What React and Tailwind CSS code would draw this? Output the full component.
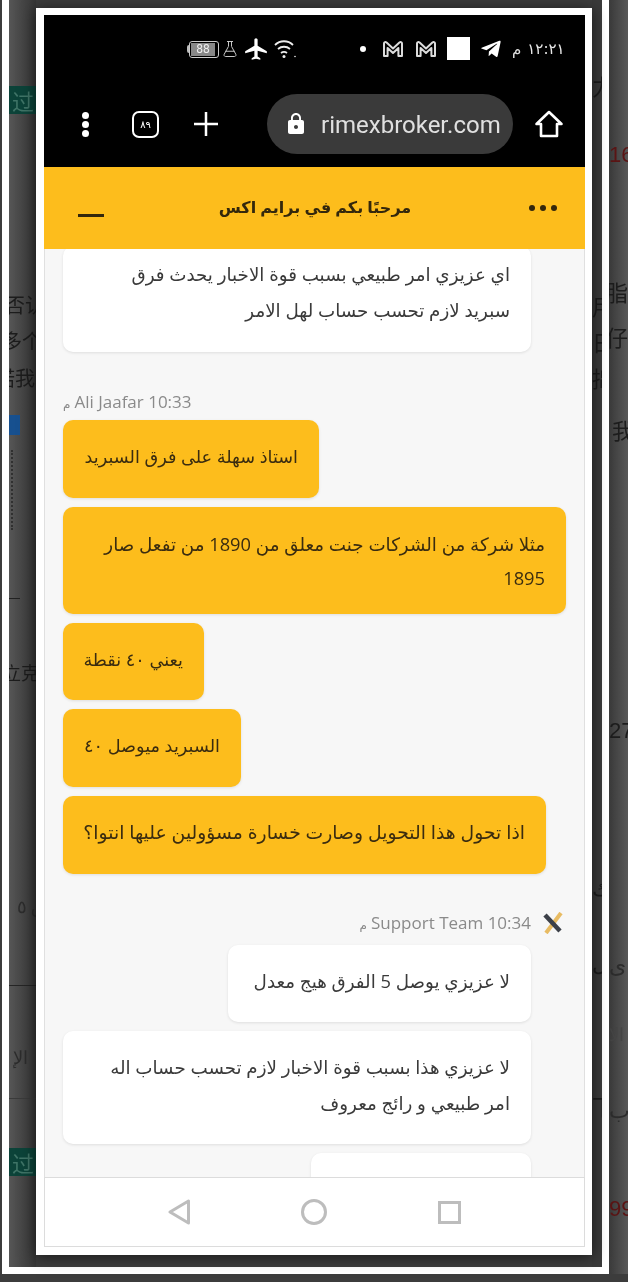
import { FaTelegramPlane } from 'react-icons/fa';
import { MdAirplanemodeActive, MdLock } from 'react-icons/md';
import { FlaskConical } from 'lucide-react';

const font = "font-['Open_Sans','Noto_Sans','DejaVu_Sans',sans-serif]";

function MailM() {
  return (
    <svg width="22" height="18" viewBox="0 0 22 18" fill="none" stroke="#dcdcdc" strokeWidth="2">
      <path d="M2 16V3.5C2 2 3.6 1.6 4.6 2.6L11 8.5l6.4-5.9c1-1 2.6-.6 2.6.9V16h-3.6V8L11 13 5.6 8v8z" strokeLinejoin="round" />
    </svg>
  );
}

function Bubble({ className, children }) {
  return (
    <div dir="rtl" className={`flex items-center rounded-[10px] shadow-[0_1px_3px_rgba(0,0,0,0.1)] shrink-0 ${className}`}>
      <div className="pb-[6px]">{children}</div>
    </div>
  );
}

function LeftStrip() {
  return (
    <div className="w-[27px] h-full shrink-0 bg-linear-to-r from-[#565656] to-[#363636] overflow-hidden flex flex-col text-[20px] leading-[36px] text-[#1c1c1c] font-['Noto_Sans_CJK_SC',sans-serif] whitespace-nowrap">
      <div className="mt-[86px] h-[28px] bg-[#0c4339] text-[#3f7467] text-[22px] leading-[28px] pl-[3px]">过</div>
      <div className="mt-[173px] -ml-[4px]">否认</div>
      <div className="-ml-[7px]">多个</div>
      <div className="mt-px -ml-[14px]">诺我</div>
      <div className="mt-[19px] w-[11px] h-[20px] bg-[#17508f]"></div>
      <div className="mt-[15px] ml-[2px] w-[4px] h-[80px] border-l-2 border-dotted border-[#303030]"></div>
      <div className="mt-[68px] w-[11px] h-px bg-[#222]"></div>
      <div className="mt-[55px] -ml-[6px] text-[18px]">立克</div>
      <div className="mt-[197px] pl-[8px] text-[18px] text-[#2c2c2c]">ق ٥</div>
      <div className="mt-[62px] h-px bg-[#252525]"></div>
      <div className="mt-[52px] pl-[4px] text-[18px] text-[#2c2c2c]">الإ</div>
      <div className="mt-[24px] h-px bg-[#3a3a3a]"></div>
      <div className="mt-[49px] h-[28px] bg-[#0c4339] text-[#3f7467] text-[22px] leading-[28px] pl-[3px]">过</div>
    </div>
  );
}

function MiddleStrip() {
  return (
    <div className="w-[10px] h-full shrink-0 bg-[#3a3a3a] overflow-hidden flex flex-col text-[22px] leading-[36px] text-[#1c1c1c] font-['Noto_Sans_CJK_SC',sans-serif] whitespace-nowrap">
      <div className="mt-[67px]">力</div>
      <div className="mt-[184px]">用</div>
      <div>日</div>
      <div>拙</div>
      <div className="mt-[473px]">ك</div>
      <div className="mt-[39px]">ل</div>
      <div className="mt-[108px]">下</div>
    </div>
  );
}

function RightStrip() {
  return (
    <div className="flex-1 h-full bg-linear-to-r from-[#3a3a3a] to-[#585858] overflow-hidden flex flex-col text-[22px] leading-[36px] text-[#1c1c1c] font-['Noto_Sans_CJK_SC',sans-serif] whitespace-nowrap">
      <div className="mt-[137px] text-[#5a1414] font-['Liberation_Sans',sans-serif]">16</div>
      <div className="mt-[100px] flex justify-end">脂</div>
      <div className="mt-[9px] flex justify-end">仔</div>
      <div className="mt-[57px] pl-[3px]">我</div>
      <div className="mt-[266px] font-['Liberation_Sans',sans-serif]">27</div>
      <div className="mt-[196px] text-[#2c2c2c]">ى</div>
      <div className="mt-[34px] text-[18px] text-[#444]">الا</div>
      <div className="mt-[39px] text-[#2c2c2c]">ب</div>
      <div className="mt-[65px] text-[#5a1414] font-['Liberation_Sans',sans-serif]">99</div>
    </div>
  );
}

function StatusBar() {
  return (
    <div className="h-[68px] flex items-center pl-[143px] text-white">
      {/* battery */}
      <div className="w-[32px] h-[17px] flex items-center">
        <div className="w-[2px] h-[8px] bg-[#bbb] rounded-l-sm"></div>
        <div className="flex-1 h-[17px] border border-[#ccc] rounded-[3px] p-px">
          <div className="h-full w-[24px] bg-[#888] text-[12px] leading-[13px] text-center text-[#eee] font-['Roboto',sans-serif]">88</div>
        </div>
      </div>
      <FlaskConical size={18} strokeWidth={1.3} color="#ccc" className="ml-[2px]" />
      <MdAirplanemodeActive size={26} className="ml-[4px]" />
      <svg width="24" height="22" viewBox="0 0 24 22" fill="none" stroke="#eee" strokeWidth="1.8" className="ml-[4px]">
        <path d="M2 7c5-5 13-5 18 0M5 11c3.500-3 8.500-3 12 0M8 15c2-1.500 4-1.500 6 0" />
        <circle cx="11" cy="18.500" r="1.500" fill="#eee" stroke="none" />
        <circle cx="22" cy="18.500" r="0.800" fill="#eee" stroke="none" />
      </svg>
      <div className="ml-[63px] w-[6px] h-[6px] rounded-full bg-white"></div>
      <div className="ml-[16px]"><MailM /></div>
      <div className="ml-[11px]"><MailM /></div>
      <div className="ml-[10px] w-[23px] h-[23px] -mt-px bg-white"></div>
      <FaTelegramPlane size={22} className="ml-[10px]" />
      <span className="ml-[10px] text-[15px] text-[#ddd] font-['DejaVu_Sans',sans-serif]">م</span>
      <span className="ml-[6px] text-[15px] text-[#e8e8e8] font-['DejaVu_Sans',sans-serif]">١٢:٢١</span>
    </div>
  );
}

function BrowserBar() {
  return (
    <div className="h-[84px] pb-[2px] flex items-center text-white">
      <div className="ml-[38px] w-[8px] flex flex-col gap-[2px]">
        <div className="w-[7px] h-[7px] rounded-full bg-white"></div>
        <div className="w-[7px] h-[7px] rounded-full bg-white"></div>
        <div className="w-[7px] h-[7px] rounded-full bg-white"></div>
      </div>
      <div className="ml-[42px] w-[27px] h-[27px] border-[2.5px] border-white rounded-[7px] flex items-center justify-center text-[10px] font-['DejaVu_Sans',sans-serif]">٨٩</div>
      <svg width="24" height="24" viewBox="0 0 24 24" stroke="#fff" strokeWidth="2.5" className="ml-[35px]">
        <path d="M0 12h24M12 0v24" />
      </svg>
      <div className="ml-[49px] w-[246px] h-[60px] rounded-full bg-[#3a3a3a] flex items-center pl-[17px]">
        <MdLock size={24} className="text-white" />
        <span className="ml-[13px] mt-[1px] text-[24px] text-[#e0e0e0] font-['Roboto',sans-serif]">rimexbroker.com</span>
      </div>
      <svg width="30" height="30" viewBox="0 0 30 30" fill="none" stroke="#fff" strokeWidth="2.6" strokeLinejoin="round" className="ml-[21px]">
        <path d="M15 3 2.500 15H7v12h16V15h4.500z" />
      </svg>
    </div>
  );
}

function Header() {
  return (
    <div className="h-[82px] bg-[#fdbd1c] flex items-center relative">
      <div className="ml-[34px] mt-[14px] w-[26px] h-[3px] bg-[#33270c]"></div>
      <div dir="rtl" className={`flex-1 text-center text-[16px] font-bold text-[#33270c] pr-[3px] pb-[2px] ${font}`}>مرحبًا بكم في برايم اكس</div>
      <div className="mr-[28px] flex gap-[5px]">
        <div className="w-[6px] h-[6px] rounded-full bg-[#33270c]"></div>
        <div className="w-[6px] h-[6px] rounded-full bg-[#33270c]"></div>
        <div className="w-[6px] h-[6px] rounded-full bg-[#33270c]"></div>
      </div>
    </div>
  );
}

function Chat() {
  const yellow = 'bg-[#fdbd1c] text-[#3a2c10] pl-[10px] pr-[21px]';
  const white = 'bg-white text-[#3a3a3a] pl-[10px] pr-[21px] self-end mr-[35px]';
  return (
    <div className={`h-[928px] overflow-hidden bg-[#f7f7f7] border-x border-[#e0e0e0] px-[18px] flex flex-col gap-[9px] text-[18.300px] leading-[36px] ${font}`}>
      <Bubble className={`${white} w-[468px] h-[106px] -mt-[3px]`}>
        <div className="pb-[8px]">
          اي عزيزي امر طبيعي بسبب قوة الاخبار يحدث فرق
          <br />
          سبريد لازم تحسب حساب لهل الامر
        </div>
      </Bubble>

      <div className="mt-[30px] -mb-[2px] h-[22px] flex items-center text-[17px] leading-[22px] text-[#8a8a8a]">
        <span className="text-[12px] mt-[4px] mr-[4px]">م</span>Ali Jaafar 10:33
      </div>
      <Bubble className={`${yellow} w-[256px] h-[78px] text-[17.700px]`}>استاذ سهلة على فرق السبريد</Bubble>
      <Bubble className={`${yellow} w-[503px] h-[107px] leading-[34px]`}>
        <div className="pt-[6px]">مثلا شركة من الشركات جنت معلق من 1890 من تفعل صار 1895</div>
      </Bubble>
      <Bubble className={`${yellow} w-[141px] h-[77px] text-[17.700px]`}>يعني ٤٠ نقطة</Bubble>
      <Bubble className={`${yellow} w-[178px] h-[78px] text-[17.700px]`}>السبريد ميوصل ٤٠</Bubble>
      <Bubble className={`${yellow} w-[483px] h-[78px] text-[18.800px]`}>اذا تحول هذا التحويل وصارت خسارة مسؤولين عليها انتوا؟</Bubble>

      <div className="mt-[29px] mb-[2px] h-[22px] flex items-center justify-end text-[17px] leading-[22px] text-[#8a8a8a]">
        <span className="text-[12px] mt-[4px] mr-[4px]">م</span>Support Team 10:34
        <svg width="24" height="22" viewBox="0 0 24 22" className="ml-[10px] mr-px">
          <path d="M20 1 5 21" stroke="#e8bb62" strokeWidth="4" />
          <path d="M4 3 19 19" stroke="#3c4048" strokeWidth="4.500" />
        </svg>
      </div>
      <Bubble className={`${white} w-[303px] h-[77px]`}>لا عزيزي يوصل 5 الفرق هيج معدل</Bubble>
      <Bubble className={`${white} w-[468px] h-[113px]`}>
        لا عزيزي هذا بسبب قوة الاخبار لازم تحسب حساب اله
        <br />
        امر طبيعي و رائج معروف
      </Bubble>
      <Bubble className={`${white} w-[220px] h-[90px]`}></Bubble>
    </div>
  );
}

function NavBar() {
  return (
    <div className="h-[70px] bg-white border border-[#dcdcdc] flex items-center pl-[123px] gap-[111px]">
      <svg width="22" height="26" viewBox="0 0 22 26" fill="none" stroke="#bdbdbd" strokeWidth="3" strokeLinejoin="round">
        <path d="M20.500 2v22L2 13z" />
      </svg>
      <svg width="26" height="26" viewBox="0 0 26 26" fill="none" stroke="#bdbdbd" strokeWidth="3">
        <circle cx="13" cy="13" r="11.500" />
      </svg>
      <div className="w-[23px] h-[23px] border-[3px] border-[#bdbdbd]"></div>
    </div>
  );
}

export default function App() {
  return (
    <div className="w-[628px] h-[1282px] bg-[#3c3c3c] overflow-hidden blur-[0.4px]">
      <div className="flex h-[1274px]">
        <div className="w-[2px] shrink-0"></div>
        <div className="w-[607px] shrink-0 border-x-[7px] border-b-[7px] border-white flex">
          <LeftStrip />
          <div className="w-[556px] h-[1247px] shrink-0 mt-[8px] bg-white pl-[8px] pr-[7px] pt-[7px] shadow-[0_2px_14px_rgba(0,0,0,0.6)] relative">
            <div className="bg-black">
              <StatusBar />
              <BrowserBar />
            </div>
            <Header />
            <Chat />
            <NavBar />
          </div>
          <MiddleStrip />
        </div>
        <RightStrip />
      </div>
    </div>
  );
}
